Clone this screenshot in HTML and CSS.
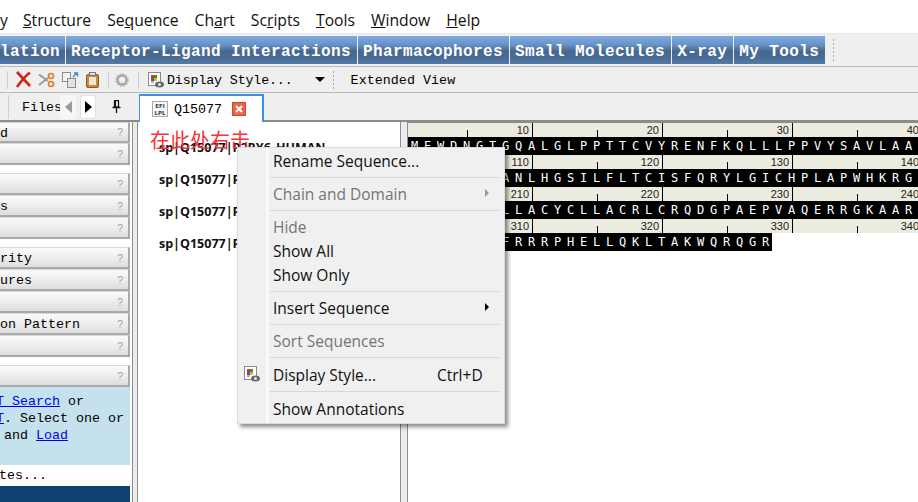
FILE: index.html

```html
<!DOCTYPE html>
<html lang="en">
<head>
  <meta charset="UTF-8">
  <title>Q15077</title>
  <link rel="stylesheet" href="styles.css">
</head>
<body>

<svg class="defs" width="0" height="0">
  <symbol id="icon-style" viewBox="0 0 16 16">
    <rect x="0.5" y="0.5" width="12" height="13" fill="#fff" stroke="#8a8a8a"/>
    <rect x="3" y="3" width="3" height="3" fill="#e0301e"/>
    <rect x="6" y="3" width="3" height="3" fill="#2c9a2c"/>
    <rect x="3" y="6" width="3" height="3" fill="#2a62d0"/>
    <rect x="6" y="6" width="3" height="3" fill="#f0b400"/>
    <rect x="3" y="9" width="3" height="2" fill="#d8a0a0"/>
    <ellipse cx="11.5" cy="12.5" rx="4.5" ry="3" fill="#5c6a78"/>
    <circle cx="11.5" cy="12.5" r="1.5" fill="#dfe6ee"/>
  </symbol>
</svg>

<div class="menubar">
  <span class="cut">y</span>
  <span><u>S</u>tructure</span>
  <span>Se<u>q</u>uence</span>
  <span>Ch<u>a</u>rt</span>
  <span>Sc<u>r</u>ipts</span>
  <span><u>T</u>ools</span>
  <span><u>W</u>indow</span>
  <span><u>H</u>elp</span>
</div>

<div class="appbar">
  <div class="bluebtn first">lation</div>
  <div class="bluebtn">Receptor-Ligand Interactions</div>
  <div class="bluebtn">Pharmacophores</div>
  <div class="bluebtn">Small Molecules</div>
  <div class="bluebtn">X-ray</div>
  <div class="bluebtn">My Tools</div>
  <div class="grip grip-app"></div>
</div>

<div class="toolbar">
  <div class="tsep sep-a"></div>
  <svg class="ticon icon-x" width="17" height="17" viewBox="0 0 17 17">
    <path d="M2 1 L15 15 M15 1.500 Q9 6 2 16" fill="none" stroke="#d2231c" stroke-width="2.600"/>
  </svg>
  <svg class="ticon icon-cut" width="17" height="16" viewBox="0 0 17 16">
    <path d="M1 2.500 L10 9 M1 13 L10 6" stroke="#9a9a9a" stroke-width="2" fill="none"/>
    <circle cx="13" cy="4" r="2.500" fill="none" stroke="#e07a1f" stroke-width="1.600"/>
    <circle cx="13" cy="12" r="2.500" fill="none" stroke="#e07a1f" stroke-width="1.600"/>
  </svg>
  <svg class="ticon icon-copy" width="17" height="16" viewBox="0 0 17 16">
    <rect x="0.500" y="0.500" width="8" height="9" fill="#f4f4f4" stroke="#8b8b8b"/>
    <rect x="5.500" y="6.500" width="8" height="9" fill="#e2e2e2" stroke="#8b8b8b"/>
    <path d="M11 5 L15 1 M12 1 L15.500 1 L15.500 4.500" fill="none" stroke="#4a8ad0" stroke-width="1.400"/>
  </svg>
  <svg class="ticon icon-paste" width="13" height="16" viewBox="0 0 13 16">
    <rect x="0.500" y="2.500" width="12" height="13" rx="1.500" fill="#c58a3c" stroke="#8a5a1e"/>
    <rect x="3" y="5" width="7" height="8" fill="#f3e7d0"/>
    <rect x="3.500" y="0.500" width="6" height="3" fill="#dfdfdf" stroke="#777"/>
  </svg>
  <div class="tsep sep-b"></div>
  <svg class="ticon icon-gear" width="14" height="14" viewBox="0 0 14 14">
    <circle cx="7" cy="7" r="4.500" fill="none" stroke="#a8a8a8" stroke-width="2.400"/>
    <circle cx="7" cy="7" r="6" fill="none" stroke="#b4b4b4" stroke-width="1.500" stroke-dasharray="1.800 1.340"/>
  </svg>
  <div class="tsep sep-c"></div>
  <svg class="ticon icon-style" width="16" height="16"><use href="#icon-style"/></svg>
  <span class="ttext style-label">Display Style...</span>
  <span class="caret"></span>
  <div class="grip grip-tool"></div>
  <span class="ttext extended">Extended View</span>
</div>

<div class="tabbar">
  <div class="tsep sep-tab"></div>
  <span class="files">Files</span>
  <span class="nav nav-prev"><i class="arrow-left"></i></span>
  <span class="nav nav-next"><i class="arrow-right"></i></span>
  <svg class="pin" width="9" height="13" viewBox="0 0 9 13">
    <path d="M2 0.500 H7 M2.500 1 V7 H6.500 V1 M0.500 7.500 H8.500 M4.500 8 V13" fill="none" stroke="#111" stroke-width="1.300"/>
    <rect x="2" y="1" width="2" height="6" fill="#111"/>
  </svg>
  <div class="tab">
    <svg class="tab-icon" width="16" height="16" viewBox="0 0 16 16">
      <rect x="0.500" y="0.500" width="15" height="15" fill="#f6f6f6" stroke="#a9a9a9"/>
      <text x="8" y="7" text-anchor="middle" class="tab-icon-text">EFI</text>
      <text x="8" y="13.500" text-anchor="middle" class="tab-icon-text">LPL</text>
    </svg>
    <span class="tab-title">Q15077</span>
    <span class="tab-close">
      <svg width="8" height="8" viewBox="0 0 8 8"><path d="M1 1 L7 7 M7 1 L1 7" stroke="#fff" stroke-width="2"/></svg>
    </span>
  </div>
</div>

<div class="main">
  <div class="leftpanel">
    <div class="group">
      <div class="row"><span>d</span><em>?</em></div>
      <div class="row"><span></span><em>?</em></div>
    </div>
    <div class="group">
      <div class="row"><span></span><em>?</em></div>
      <div class="row"><span>s</span><em>?</em></div>
      <div class="row"><span></span><em>?</em></div>
    </div>
    <div class="group">
      <div class="row"><span>rity</span><em>?</em></div>
      <div class="row"><span>ures</span><em>?</em></div>
      <div class="row"><span></span><em>?</em></div>
      <div class="row"><span>on Pattern</span><em>?</em></div>
      <div class="row"><span></span><em>?</em></div>
    </div>
    <div class="group">
      <div class="row"><span></span><em>?</em></div>
    </div>
    <div class="infobox">
      <div><a href="#">T Search</a> or</div>
      <div><a href="#">T</a>. Select one or</div>
      <div> and <a href="#">Load</a></div>
    </div>
    <div class="status">tes...</div>
    <div class="statusbar"></div>
  </div>

  <div class="splitter"></div>

  <div class="names">
    <div>sp|Q15077|P2RY6_HUMAN</div>
    <div>sp|Q15077|P2RY6_HUMAN</div>
    <div>sp|Q15077|P2RY6_HUMAN</div>
    <div>sp|Q15077|P2RY6_HUMAN</div>
  </div>

  <div class="splitter splitter-b"></div>

  <div class="seqpanel">
    <div class="ruler"><span>10</span><span>20</span><span>30</span><span>40</span></div>
    <div class="seq">MEWDNGTGQALGLPPTTCVYRENFKQLLLPPVYSAVLAAG</div>
    <div class="ruler"><span>110</span><span>120</span><span>130</span><span>140</span></div>
    <div class="seq">RFLFYYAANLHGSILFLTCISFQRYLGICHPLAPWHKRGG</div>
    <div class="ruler"><span>210</span><span>220</span><span>230</span><span>240</span></div>
    <div class="seq">GFLLPFALLACYCLLACRLCRQDGPAEPVAQERRGKAARM</div>
    <div class="ruler"><span>310</span><span>320</span><span>330</span><span>340</span></div>
    <div class="seq seq-end">FYFTQKKFRRRPHELLQKLTAKWQRQGR</div>
  </div>
</div>

<div class="note">在此处右击</div>

<div class="ctxmenu">
  <div class="item">Rename Sequence...</div>
  <div class="msep"></div>
  <div class="item off">Chain and Domain<i class="sub"></i></div>
  <div class="msep"></div>
  <div class="item off">Hide</div>
  <div class="item">Show All</div>
  <div class="item">Show Only</div>
  <div class="msep"></div>
  <div class="item">Insert Sequence<i class="sub"></i></div>
  <div class="msep"></div>
  <div class="item off">Sort Sequences</div>
  <div class="msep msep-tall"></div>
  <div class="item"><svg class="item-icon" width="16" height="16"><use href="#icon-style"/></svg>Display Style...<span class="shortcut">Ctrl+D</span></div>
  <div class="msep msep-tall"></div>
  <div class="item">Show Annotations</div>
</div>

</body>
</html>
```

FILE: styles.css

```css
html, body {
  margin: 0;
  height: 100%;
}

body {
  width: 918px;
  height: 502px;
  overflow: hidden;
  position: relative;
  display: flex;
  flex-direction: column;
  background: #fff;
  color: #000;
  font-family: "Liberation Mono", monospace;
  font-size: 13.33px;
}

.defs {
  position: absolute;
}

/* menu */
.menubar {
  height: 33px;
  flex: none;
  display: flex;
  align-items: center;
  gap: 16px;
  padding-top: 7px;
  box-sizing: border-box;
  font-family: "Open Sans", sans-serif;
  font-size: 15.700px;
  color: #111;
}

.menubar .cut {
  width: 7px;
}

/* blue tool buttons */
.appbar {
  height: 34px;
  flex: none;
  box-sizing: border-box;
  display: flex;
  gap: 1px;
  padding-top: 2px;
  background: #efefef;
  border-top: 1px solid #e6e6e6;
  border-bottom: 1px solid #b9b9b9;
}

.bluebtn {
  height: 28px;
  padding: 0 6px 0 5px;
  background: linear-gradient(#7fabe2 0%, #6a94c8 30%, #47678f 55%, #4a6b94 75%, #527aa8 100%);
  color: #fff;
  font-weight: bold;
  font-size: 16px;
  letter-spacing: 0.4px;
  line-height: 33px;
  white-space: pre;
  overflow: hidden;
}

.bluebtn.first {
  padding: 0 5px 0 0;
}

.grip {
  width: 3px;
  background: radial-gradient(circle, #a8a8a8 1px, transparent 1px) 0 0 / 3px 4px;
}

.grip-app {
  height: 24px;
  margin: 2px 0 0 6px;
}

/* main toolbar */
.toolbar {
  height: 26px;
  flex: none;
  box-sizing: border-box;
  display: flex;
  align-items: center;
  background: #efefef;
  border-bottom: 1px solid #b9b9b9;
}

.tsep {
  width: 1px;
  height: 18px;
  background: #cfcfcf;
}

.sep-a {
  margin-left: 7px;
}

.ticon {
  flex: none;
}

.icon-x {
  margin-left: 7px;
}

.icon-cut {
  margin-left: 6px;
}

.icon-copy {
  margin-left: 7px;
}

.icon-paste {
  margin-left: 7px;
}

.sep-b {
  margin-left: 9px;
}

.icon-gear {
  margin-left: 6px;
}

.sep-c {
  margin-left: 9px;
}

.icon-style {
  margin-left: 9px;
}

.ttext {
  white-space: pre;
  font-size: 13.33px;
  padding-top: 2px;
}

.style-label {
  margin-left: 3px;
  letter-spacing: -0.150px;
}

.caret {
  margin-left: 22px;
  border-left: 5px solid transparent;
  border-right: 5px solid transparent;
  border-top: 5px solid #000;
}

.grip-tool {
  height: 20px;
  margin-left: 7px;
}

.extended {
  margin-left: 16px;
  letter-spacing: 0.050px;
}

/* tab row */
.tabbar {
  height: 29px;
  flex: none;
  box-sizing: border-box;
  display: flex;
  align-items: center;
  background: #efefef;
  border-bottom: 2px solid #8c8c8c;
}

.sep-tab {
  margin-left: 8px;
  height: 24px;
}

.files {
  width: 38px;
  margin-left: 13px;
  padding-top: 2px;
  overflow: hidden;
  white-space: pre;
}

.nav {
  width: 16px;
  height: 24px;
  flex: none;
  box-sizing: border-box;
  display: flex;
  align-items: center;
  justify-content: center;
  border-radius: 3px;
  background: #f6f6f6;
}

.nav-next {
  margin-left: 4px;
  background: #fff;
  border: 1px solid #e0e0e0;
}

.arrow-left {
  border-top: 6px solid transparent;
  border-bottom: 6px solid transparent;
  border-right: 7px solid #9a9a9a;
}

.arrow-right {
  border-top: 6px solid transparent;
  border-bottom: 6px solid transparent;
  border-left: 7px solid #000;
}

.pin {
  margin-left: 16px;
  flex: none;
}

.tab {
  width: 125px;
  height: 28px;
  margin: 0 0 -2px 18px;
  align-self: flex-end;
  box-sizing: border-box;
  display: flex;
  align-items: center;
  background: #fff;
  border: 1px solid #3f90ea;
  border-top-width: 2px;
  border-bottom: none;
  border-right-width: 2px;
  padding-left: 12px;
}

.tab-icon {
  flex: none;
}

.tab-icon-text {
  font-family: "DejaVu Sans", sans-serif;
  font-size: 5.500px;
  font-weight: bold;
  fill: #444;
}

.tab-title {
  margin-left: 6px;
  padding-top: 1px;
}

.tab-close {
  width: 14px;
  height: 14px;
  margin-left: 10px;
  box-sizing: border-box;
  display: flex;
  align-items: center;
  justify-content: center;
  background: #e8694e;
  border: 1px solid #c04a33;
}

/* panels */
.main {
  flex: 1;
  min-height: 0;
  display: flex;
}

.leftpanel {
  width: 130px;
  flex: none;
  display: flex;
  flex-direction: column;
}

.group {
  margin-bottom: 8px;
}

.group:nth-child(4) {
  margin-bottom: 0;
}

.row {
  height: 22px;
  box-sizing: border-box;
  display: flex;
  align-items: center;
  justify-content: space-between;
  padding-right: 5px;
  background: linear-gradient(#f9f9f9 0%, #f5f5f5 25%, #dedede 100%);
  border-top: 1px solid #d8d8d8;
  border-right: 2px solid #a9a9a9;
  border-bottom: 2px solid #a9a9a9;
  white-space: pre;
}

.row span {
  padding-top: 2px;
}

.group:first-child .row:first-child {
  height: 21px;
}

.row em {
  font-family: "Liberation Sans", sans-serif;
  font-style: normal;
  font-size: 11px;
  color: #a3a3a3;
}

.infobox {
  height: 78px;
  flex: none;
  box-sizing: border-box;
  background: #c6e1ee;
  padding-top: 6px;
  line-height: 17px;
  text-indent: -4px;
}

.infobox div {
  white-space: pre;
}

.infobox a {
  color: #0000ee;
}

.status {
  height: 21px;
  flex: none;
  line-height: 22px;
  text-indent: -1px;
}

.statusbar {
  flex: 1;
  background: #0f4170;
}

.splitter {
  width: 6px;
  margin-left: 2px;
  flex: none;
  box-sizing: border-box;
  background: #ececec;
  border-left: 1px solid #8d8d96;
  border-right: 1px solid #8d8d96;
}

.splitter-b {
  width: 8px;
  margin-left: 0;
}

.names {
  width: 262px;
  flex: none;
  box-sizing: border-box;
  padding: 10px 0 0 21px;
  font-family: "Open Sans", sans-serif;
  font-weight: bold;
  font-size: 12.500px;
  line-height: 32px;
  color: #111;
}

.names div {
  white-space: pre;
}

.seqpanel {
  flex: 1;
  min-width: 0;
  overflow: hidden;
  border-top: 1px solid #8c8c8c;
}

.ruler {
  height: 14px;
  display: flex;
  background:
    linear-gradient(90deg, #000 1px, transparent 1px) 124px 0 / 130px 100% repeat-x,
    linear-gradient(90deg, #000 1px, transparent 1px) 59px 100% / 130px 7px repeat-x,
    #ecebdf;
  font-family: "Liberation Sans", sans-serif;
  font-size: 11px;
  line-height: 15px;
  color: #222;
}

.ruler span {
  width: 130px;
  flex: none;
  text-align: right;
}

.ruler span:first-child {
  width: 121px;
}

.seq {
  height: 18px;
  padding-left: 3px;
  background: #000;
  color: #fff;
  font-family: "DejaVu Sans Mono", monospace;
  font-size: 12px;
  letter-spacing: 5.776px;
  line-height: 18px;
  white-space: pre;
}

.seq-end {
  width: 361px;
}

/* overlays */
.note {
  position: absolute;
  left: 150px;
  top: 128px;
  font-family: "Noto Sans CJK SC", sans-serif;
  font-size: 20px;
  line-height: 24px;
  color: #f4333a;
  white-space: pre;
}

.ctxmenu {
  position: absolute;
  left: 237px;
  top: 147px;
  width: 268px;
  height: 277px;
  box-sizing: border-box;
  padding: 1px 1px;
  background: linear-gradient(90deg, #f0f0f0 28px, #fafafa 28px, #fafafa 31px, #f0f0f0 31px);
  border: 1px solid #dcdcdc;
  box-shadow: 3px 3px 4px rgba(0, 0, 0, 0.45);
  font-family: "Open Sans", sans-serif;
  font-size: 15.500px;
  color: #111;
}

.item {
  height: 24px;
  position: relative;
  padding-left: 34px;
  line-height: 24px;
  white-space: pre;
}

.item.off {
  color: #757575;
}

.item-icon {
  position: absolute;
  left: 5px;
  top: 3px;
}

.sub {
  position: absolute;
  left: 246px;
  top: 7px;
  border-top: 4px solid transparent;
  border-bottom: 4px solid transparent;
  border-left: 4px solid #000;
}

.item.off .sub {
  border-left-color: #9a9a9a;
}

.shortcut {
  position: absolute;
  left: 198px;
  top: 0;
}

.msep {
  height: 1px;
  margin: 4px 4px 4px 31px;
  background: #d6d6d6;
}

.msep-tall {
  margin-bottom: 5px;
}
```
